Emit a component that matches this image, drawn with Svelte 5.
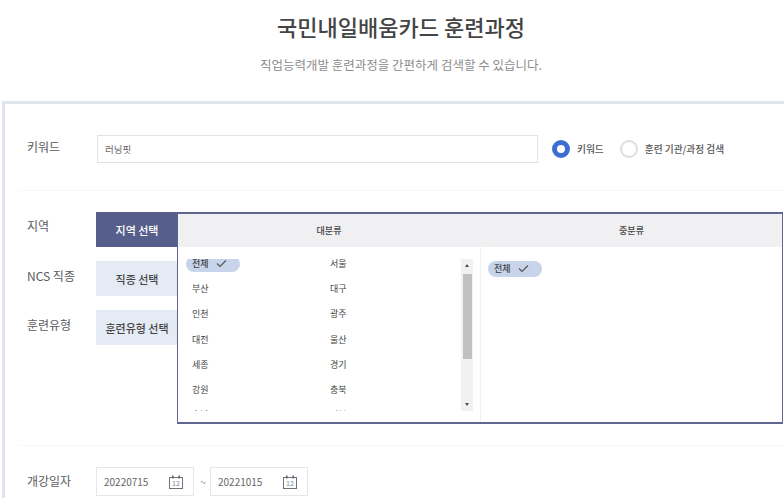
<script>
  const regions = [
    ["전체", "서울"],
    ["부산", "대구"],
    ["인천", "광주"],
    ["대전", "울산"],
    ["세종", "경기"],
    ["강원", "충북"],
    ["충남", "전북"],
  ];

  const tabs = [
    { label: "지역", text: "지역 선택", active: true },
    { label: "NCS 직종", text: "직종 선택", active: false },
    { label: "훈련유형", text: "훈련유형 선택", active: false },
  ];

  const dates = ["20220715", "20221015"];
</script>

<div class="page">
  <header class="head">
    <h1>국민내일배움카드 훈련과정</h1>
    <p>직업능력개발 훈련과정을 간편하게 검색할 수 있습니다.</p>
  </header>

  <section class="card">
    <div class="row keyword-row">
      <span class="label">키워드</span>
      <div class="keyword-input">러닝핏</div>
      <div class="radios">
        <span class="radio on"></span>
        <span class="radio-text first">키워드</span>
        <span class="radio"></span>
        <span class="radio-text">훈련 기관/과정 검색</span>
      </div>
    </div>

    <div class="row select-row">
      <div class="tabs">
        {#each tabs as tab}
          <div class="tab-line">
            <span class="label">{tab.label}</span>
            <button class="tab" class:active={tab.active}>{tab.text}</button>
          </div>
        {/each}
      </div>

      <!-- dropdown panel lies over the row -->
      <div class="panel">
        <div class="panel-col left">
          <div class="col-head">대분류</div>
          <div class="list-wrap">
            <div class="list">
              {#each regions as pair, i}
                <div class="cell">
                  {#if i === 0}
                    <span class="pill">{pair[0]}
                      <svg width="11" height="9" viewBox="0 0 11 9"><path d="M1 4.5L4 7.5L10 1.5" fill="none" stroke="#555" stroke-width="1.1"/></svg>
                    </span>
                  {:else}
                    <span class="item">{pair[0]}</span>
                  {/if}
                </div>
                <div class="cell"><span class="item">{pair[1]}</span></div>
              {/each}
            </div>
            <div class="scrollbar">
              <span class="arrow up"></span>
              <span class="thumb"></span>
              <span class="arrow down"></span>
            </div>
          </div>
        </div>
        <div class="panel-col right">
          <div class="col-head">중분류</div>
          <div class="right-body">
            <span class="pill">전체
              <svg width="11" height="9" viewBox="0 0 11 9"><path d="M1 4.5L4 7.5L10 1.5" fill="none" stroke="#555" stroke-width="1.1"/></svg>
            </span>
          </div>
        </div>
      </div>
    </div>

    <div class="row date-row">
      <span class="label">개강일자</span>
      {#each dates as date, i}
        {#if i > 0}<span class="tilde">~</span>{/if}
        <div class="date-input">
          <span>{date}</span>
          <svg width="14" height="14" viewBox="0 0 14 14">
            <rect x="0.5" y="2.5" width="13" height="11" fill="none" stroke="#6a7480"/>
            <rect x="3" y="0.5" width="1.5" height="3" fill="#5a6470"/>
            <rect x="9.5" y="0.5" width="1.5" height="3" fill="#5a6470"/>
            <text x="7" y="11" text-anchor="middle" font-size="7" fill="#7a8490">12</text>
          </svg>
        </div>
      {/each}
    </div>
  </section>
</div>

<style>
  :global(body) {
    margin: 0;
    background: #fff;
    overflow: hidden;
  }

  .page {
    width: 784px;
    height: 498px;
    overflow: hidden;
    font-family: "Noto Sans CJK KR", "Noto Sans", sans-serif;
    color: #333;
  }

  .head {
    height: 101px;
    box-sizing: border-box;
    padding: 10px 0 0 18px;
    text-align: center;
  }

  .head h1 {
    margin: 0;
    font-size: 22px;
    font-weight: 500;
    line-height: 32px;
    color: #444;
  }

  .head p {
    margin: 15px 0 0;
    font-size: 12.5px;
    line-height: 16px;
    color: #8c8c8c;
  }

  .card {
    margin-left: 2px;
    width: 800px;
    height: 400px;
    box-sizing: border-box;
    border-left: 3px solid #dfe4ef;
    border-top: 3px solid #dfe4ef;
  }

  .row {
    margin-left: 15px;
    padding-left: 7px;
    display: flex;
    border-bottom: 1px solid #f7f7f7;
  }

  .label {
    width: 70px;
    flex: none;
    font-size: 12px;
    line-height: 18px;
    color: #5c5c5c;
  }

  .keyword-row {
    padding-top: 31px;
    height: 55px;
    align-items: flex-start;
  }

  .keyword-row .label {
    margin-top: 3px;
  }

  .keyword-input {
    width: 441px;
    height: 28px;
    box-sizing: border-box;
    border: 1px solid #e2e2e2;
    padding-left: 7px;
    font-size: 9.5px;
    line-height: 27px;
    color: #666;
  }

  .radios {
    display: flex;
    align-items: center;
    height: 28px;
    margin-left: 14px;
  }

  .radio {
    width: 18px;
    height: 18px;
    box-sizing: border-box;
    border: 2px solid #dedede;
    border-radius: 50%;
  }

  .radio.on {
    border: 5.5px solid #3c6ed2;
  }

  .radio-text {
    margin-left: 7px;
    font-size: 9.7px;
    font-weight: 500;
    color: #555;
  }

  .radio-text.first {
    margin-right: 16px;
  }

  .select-row {
    position: relative;
    padding-top: 21px;
    height: 233px;
  }

  .tab-line {
    display: flex;
    margin-bottom: 14px;
  }

  .tab-line .label {
    margin-top: 5px;
  }

  .tab-line:nth-child(n + 2) .label {
    margin-top: 6px;
  }

  .tab {
    width: 82px;
    height: 35px;
    margin-left: -1px;
    padding: 0;
    border: none;
    background: #e4ebf5;
    font-family: inherit;
    font-size: 11px;
    font-weight: 500;
    color: #444;
  }

  .tab.active {
    background: #565f8c;
    color: #fff;
  }

  .panel {
    position: absolute;
    left: 157px;
    top: 21px;
    width: 606px;
    height: 212px;
    box-sizing: border-box;
    border: 2px solid #5f6690;
    border-left-width: 1.5px;
    border-right-width: 1.5px;
    background: #fff;
    display: flex;
  }

  .panel-col.left {
    width: 302px;
    flex: none;
  }

  .panel-col.right {
    flex: 1;
    border-left: 1px solid #f0f0f0;
  }

  .col-head {
    height: 33px;
    background: #f0f0f3;
    text-align: center;
    font-size: 9px;
    font-weight: 500;
    line-height: 33px;
    color: #444;
  }

  .list-wrap {
    position: relative;
    height: 152px;
    margin-top: 12px;
    overflow: hidden;
  }

  .list {
    display: grid;
    grid-template-columns: 138px 138px;
    grid-auto-rows: 25.2px;
    margin-top: -8px;
    padding-left: 8px;
  }

  .cell {
    display: flex;
    align-items: center;
  }

  .item {
    padding-left: 6px;
    font-size: 9px;
    color: #444;
  }

  .pill {
    display: inline-flex;
    align-items: center;
    gap: 7px;
    width: 54px;
    height: 16px;
    box-sizing: border-box;
    padding: 0 0 0 6px;
    border-radius: 8px;
    background: #c8d4ea;
    font-size: 9px;
    font-weight: 500;
    color: #444;
  }

  .scrollbar {
    position: absolute;
    right: 7px;
    top: 0;
    bottom: 0;
    width: 12px;
    background: #f1f1f1;
  }

  .thumb {
    position: absolute;
    left: 2px;
    top: 15px;
    width: 9px;
    height: 85px;
    background: #c0c0c0;
  }

  .arrow {
    position: absolute;
    left: 3.5px;
    border-left: 2.5px solid transparent;
    border-right: 2.5px solid transparent;
  }

  .arrow.up {
    top: 5px;
    border-bottom: 3px solid #505050;
  }

  .arrow.down {
    bottom: 5px;
    border-top: 3px solid #505050;
  }

  .right-body {
    padding: 6px 7px;
  }

  .date-row {
    padding-top: 21px;
    border-bottom: none;
    align-items: flex-start;
  }

  .date-row .label {
    margin-top: 5px;
  }

  .date-input {
    width: 98px;
    height: 29px;
    margin-left: -1px;
    box-sizing: border-box;
    border: 1px solid #e6e6e6;
    padding: 0 10px 0 7px;
    display: flex;
    align-items: center;
    justify-content: space-between;
    font-size: 10px;
    color: #666;
  }

  .tilde {
    width: 16px;
    margin-left: 1px;
    text-align: center;
    font-size: 10px;
    line-height: 29px;
    color: #999;
  }
</style>
